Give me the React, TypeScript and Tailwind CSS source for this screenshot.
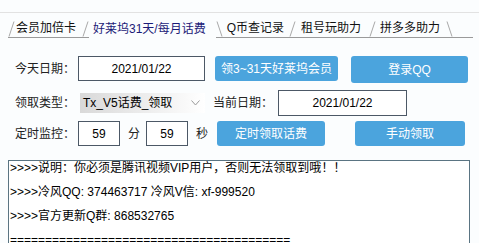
import React from 'react';

const font = "font-['Liberation_Sans','Noto_Sans_CJK_SC',sans-serif]";

function Sep({ dir }: { dir: '/' | '\\' }) {
  return (
    <svg width="7" height="16" viewBox="0 0 7 16" className="shrink-0">
      {dir === '/' ? (
        <line x1="1" y1="15.5" x2="6" y2="0.5" stroke="#a8a8a8" strokeWidth="1" />
      ) : (
        <line x1="1" y1="0.5" x2="6" y2="15.5" stroke="#a8a8a8" strokeWidth="1" />
      )}
    </svg>
  );
}

function Tab({ label, className }: { label: string; className: string }) {
  return (
    <span className={`shrink-0 whitespace-nowrap pb-[1px] text-[12px] leading-[16px] ${className}`}>
      {label}
    </span>
  );
}

function Btn({ label, className }: { label: string; className: string }) {
  return (
    <div
      className={`flex shrink-0 items-center justify-center whitespace-nowrap rounded-[3px] bg-[#4ba4dd] text-[12px] text-white ${className}`}
    >
      {label}
    </div>
  );
}

function Field({ value, className }: { value: string; className: string }) {
  return (
    <div
      className={`flex shrink-0 items-center justify-center border border-[#4c5866] bg-white text-[12px] text-black ${className}`}
    >
      {value}
    </div>
  );
}

const logLines = [
  '>>>>说明：你必须是腾讯视频VIP用户，否则无法领取到哦！！',
  '>>>>冷风QQ: 374463717 冷风V信: xf-999520',
  '>>>>官方更新Q群: 868532765',
  '========================================',
];

export default function App() {
  return (
    <div className={`h-[243px] w-[479px] overflow-hidden bg-[#fbfdfe] ${font}`}>
      {/* top rule */}
      <div className="h-[13px] border-b border-[#e2e2e2]" />

      {/* tabs */}
      <div className="mt-[6px] flex h-[19px] items-end">
        <div className="ml-[8px] flex h-[19px] shrink-0 items-end border-b border-[#9a9a9a]">
          <Sep dir="/" />
          <Tab label="会员加倍卡" className="ml-[1px] mr-[6px] text-[#111]" />
          <Sep dir="/" />
        </div>
        <div className="flex h-[19px] shrink-0 items-end">
          <Tab label="好莱坞31天/每月话费" className="ml-[4px] mr-[10px] text-[#1b1b78]" />
        </div>
        <div className="mr-[6px] flex h-[19px] flex-1 items-end border-b border-[#9a9a9a]">
          <Sep dir="\" />
          <Tab label="Q币查记录" className="ml-[4px] mr-[5px] text-[#111]" />
          <Sep dir="/" />
          <Tab label="租号玩助力" className="ml-[5px] mr-[8px] text-[#111]" />
          <Sep dir="/" />
          <Tab label="拼多多助力" className="ml-[4px] mr-[6px] text-[#111]" />
          <Sep dir="\" />
        </div>
      </div>

      {/* form */}
      <div className="mt-[17px] flex flex-col">
        <div className="flex h-[27px] items-center">
          <span className="ml-[15px] w-[63px] shrink-0 text-[12px] text-[#222]">今天日期：</span>
          <Field value="2021/01/22" className="h-[25px] w-[127px]" />
          <Btn label="领3~31天好莱坞会员" className="ml-[10px] h-[25px] w-[123px]" />
          <Btn label="登录QQ" className="ml-[13px] mt-[2px] h-[27px] w-[117px]" />
        </div>

        <div className="mt-[8px] flex h-[26px] items-center">
          <span className="ml-[15px] w-[65px] shrink-0 text-[12px] text-[#222]">领取类型：</span>
          <div className="flex h-[20px] w-[125px] shrink-0 items-center bg-gradient-to-r from-[#d9d9d9] via-[#ececec] to-white pl-[3px] text-[12px] text-black">
            <span className="flex-1">Tx_V5话费_领取</span>
            <svg width="9" height="6" viewBox="0 0 9 6" className="mr-[5px]">
              <polyline points="0.5,0.5 4.5,5 8.5,0.5" fill="none" stroke="#9a9a9a" strokeWidth="1" />
            </svg>
          </div>
          <span className="ml-[8px] w-[65px] shrink-0 text-[12px] text-[#222]">当前日期：</span>
          <Field value="2021/01/22" className="h-[26px] w-[129px]" />
        </div>

        <div className="mt-[5px] flex h-[25px] items-center">
          <span className="ml-[15px] w-[63px] shrink-0 text-[12px] text-[#222]">定时监控：</span>
          <Field value="59" className="h-[25px] w-[42px]" />
          <span className="ml-[8px] w-[18px] shrink-0 text-[12px] text-[#222]">分</span>
          <Field value="59" className="h-[25px] w-[42px]" />
          <span className="ml-[8px] w-[21px] shrink-0 text-[12px] text-[#222]">秒</span>
          <Btn label="定时领取话费" className="h-[25px] w-[108px]" />
          <Btn label="手动领取" className="ml-[30px] h-[25px] w-[110px]" />
        </div>
      </div>

      {/* log */}
      <div className="ml-[8px] mt-[14px] h-[100px] w-[462px] overflow-hidden border border-[#5a7482] bg-white pl-[1px]">
        {logLines.map((line, i) => (
          <div key={i} className="h-[24px] whitespace-nowrap text-[12px] leading-[14px] text-black">
            {line}
          </div>
        ))}
      </div>
    </div>
  );
}
